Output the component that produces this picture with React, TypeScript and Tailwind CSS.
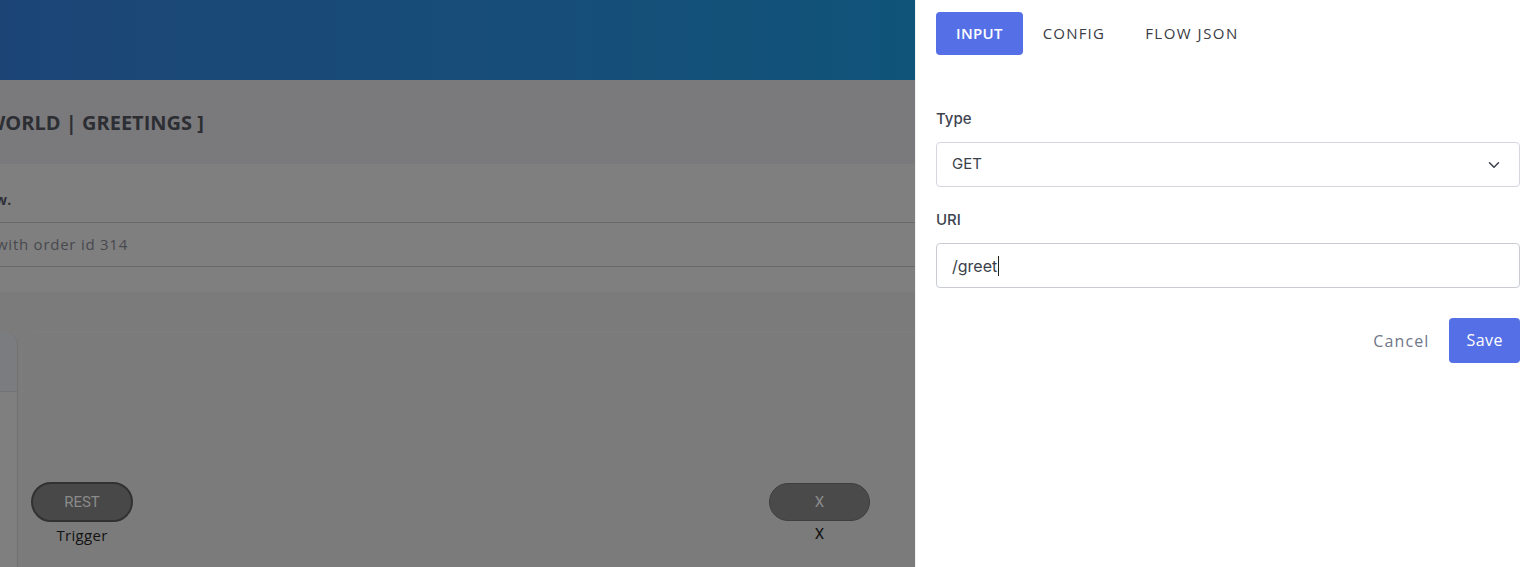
import { ChevronDown } from 'lucide-react';

const poppins = { fontFamily: '"Open Sans", "Noto Sans", sans-serif' };

function FlowNode({ label, caption, x, y, thick }: { label: string; caption: string; x: number; y: number; thick?: boolean }) {
  return (
    <div className="absolute flex flex-col items-center" style={{ left: x, top: y }}>
      <div
        className={
          thick
            ? 'flex h-[40px] w-[102px] items-center justify-center rounded-full border-2 border-[#313131] bg-[#484848] text-[15px] text-[#8b8b8b]'
            : 'flex h-[38px] w-[101px] items-center justify-center rounded-full border border-[#3e3e3e] bg-[#4a4a4a] text-[15px] text-[#8b8b8b]'
        }
        style={{ fontFamily: 'Roboto, "Liberation Sans", sans-serif' }}
      >
        {label}
      </div>
      <div
        className="mt-[3px] text-[15px] leading-[20px] tracking-[0.02em] text-[#121212]"
        style={caption === 'X' ? { fontFamily: 'Roboto, sans-serif' } : poppins}
      >
        {caption}
      </div>
    </div>
  );
}

export default function App() {
  return (
    <div className="flex h-[567px] w-[1535px] overflow-hidden bg-white">
      {/* Dimmed page behind the drawer */}
      <div className="flex w-[915px] shrink-0 flex-col overflow-hidden bg-[#7b7b7b]" style={poppins}>
        <header className="h-[80px] shrink-0 bg-gradient-to-r from-[#1c4576] to-[#10547a]" />

        <div className="flex h-[84px] shrink-0 items-center bg-[#7a7a7c] pt-[1px]">
          <h1 className="-ml-[96px] whitespace-nowrap text-[20px] font-bold text-[#2d2e33]">[ HELLO WORLD | GREETINGS ]</h1>
        </div>

        <div className="shrink-0 bg-[#7f7f7f]">
          <div className="flex h-[59px] items-end border-b border-[#6a6a6a] pb-[12px]">
            <span className="-ml-[27px] whitespace-nowrap text-[14px] font-bold tracking-[0.03em] text-[#2f3035]">Flow.</span>
          </div>
          <div className="flex h-[44px] items-center border-b border-[#6a6a6a]">
            <span className="-ml-[4px] whitespace-nowrap text-[15px] tracking-[0.05em] text-[#48494e]">with order id 314</span>
          </div>
          <div className="h-[25px]" />
        </div>

        <div className="h-[40px] shrink-0" />

        <div className="flex flex-1 gap-[3px]">
          <div className="flex w-[18px] shrink-0 flex-col overflow-hidden rounded-tr-[14px] border-r border-[#717171]">
            <div className="h-[60px] border-b border-[#727272] bg-[#7b7c80]" />
            <div className="flex-1 bg-[#7f7f7f]" />
          </div>
          <div className="relative flex-1 rounded-tl-[14px] border-l border-t border-[#7e7e7e] bg-[#7b7b7b]">
            <FlowNode label="REST" caption="Trigger" x={9} y={149} thick />
            <FlowNode label="X" caption="X" x={747} y={150} />
          </div>
        </div>
      </div>

      {/* Drawer */}
      <aside className="flex flex-1 flex-col border-l border-[#efefef] bg-white pl-[20px] pr-[15px] pt-[12px]">
        <nav className="flex" style={poppins}>
          <button className="h-[43px] rounded-[4px] bg-[#5570e6] px-[20px] text-[15px] font-semibold tracking-[0.02em] text-white">INPUT</button>
          <button className="h-[43px] px-[20px] text-[15px] font-medium tracking-[0.08em] text-[#3a3b44]">CONFIG</button>
          <button className="h-[43px] px-[20px] text-[15px] font-medium tracking-[0.1em] text-[#3a3b44]">FLOW JSON</button>
        </nav>

        <div className="mt-[53px] flex flex-col" style={{ fontFamily: 'Inter, Roboto, sans-serif' }}>
          <label className="text-[15px] font-medium leading-[22px] text-[#3e4350]">Type</label>
          <div className="mt-[12px] flex h-[45px] items-center justify-between rounded-[4px] border border-[#d4d7dd] pl-[15px] pr-[16px]">
            <span className="text-[15px] text-[#3a3f4a]">GET</span>
            <ChevronDown className="h-[18px] w-[18px] text-[#3a3f4a]" strokeWidth={2} />
          </div>

          <label className="mt-[22px] text-[15px] font-medium leading-[22px] text-[#3e4350]">URI</label>
          <div className="mt-[12px] flex h-[45px] items-center rounded-[4px] border border-[#c9ccd3] px-[15px]">
            <span className="text-[16px] text-[#3a3f4a]">/greet</span>
            <span className="ml-[1px] h-[20px] w-px bg-[#222]" />
          </div>

          <div className="mt-[30px] flex items-center justify-end gap-[20px]" style={poppins}>
            <button className="text-[16px] leading-[20px] tracking-[0.07em] text-[#707789]">Cancel</button>
            <button className="h-[45px] rounded-[4px] bg-[#5570e6] px-[17px] pb-[2px] text-[16px] font-medium leading-[20px] tracking-[0.03em] text-white">Save</button>
          </div>
        </div>
      </aside>
    </div>
  );
}
